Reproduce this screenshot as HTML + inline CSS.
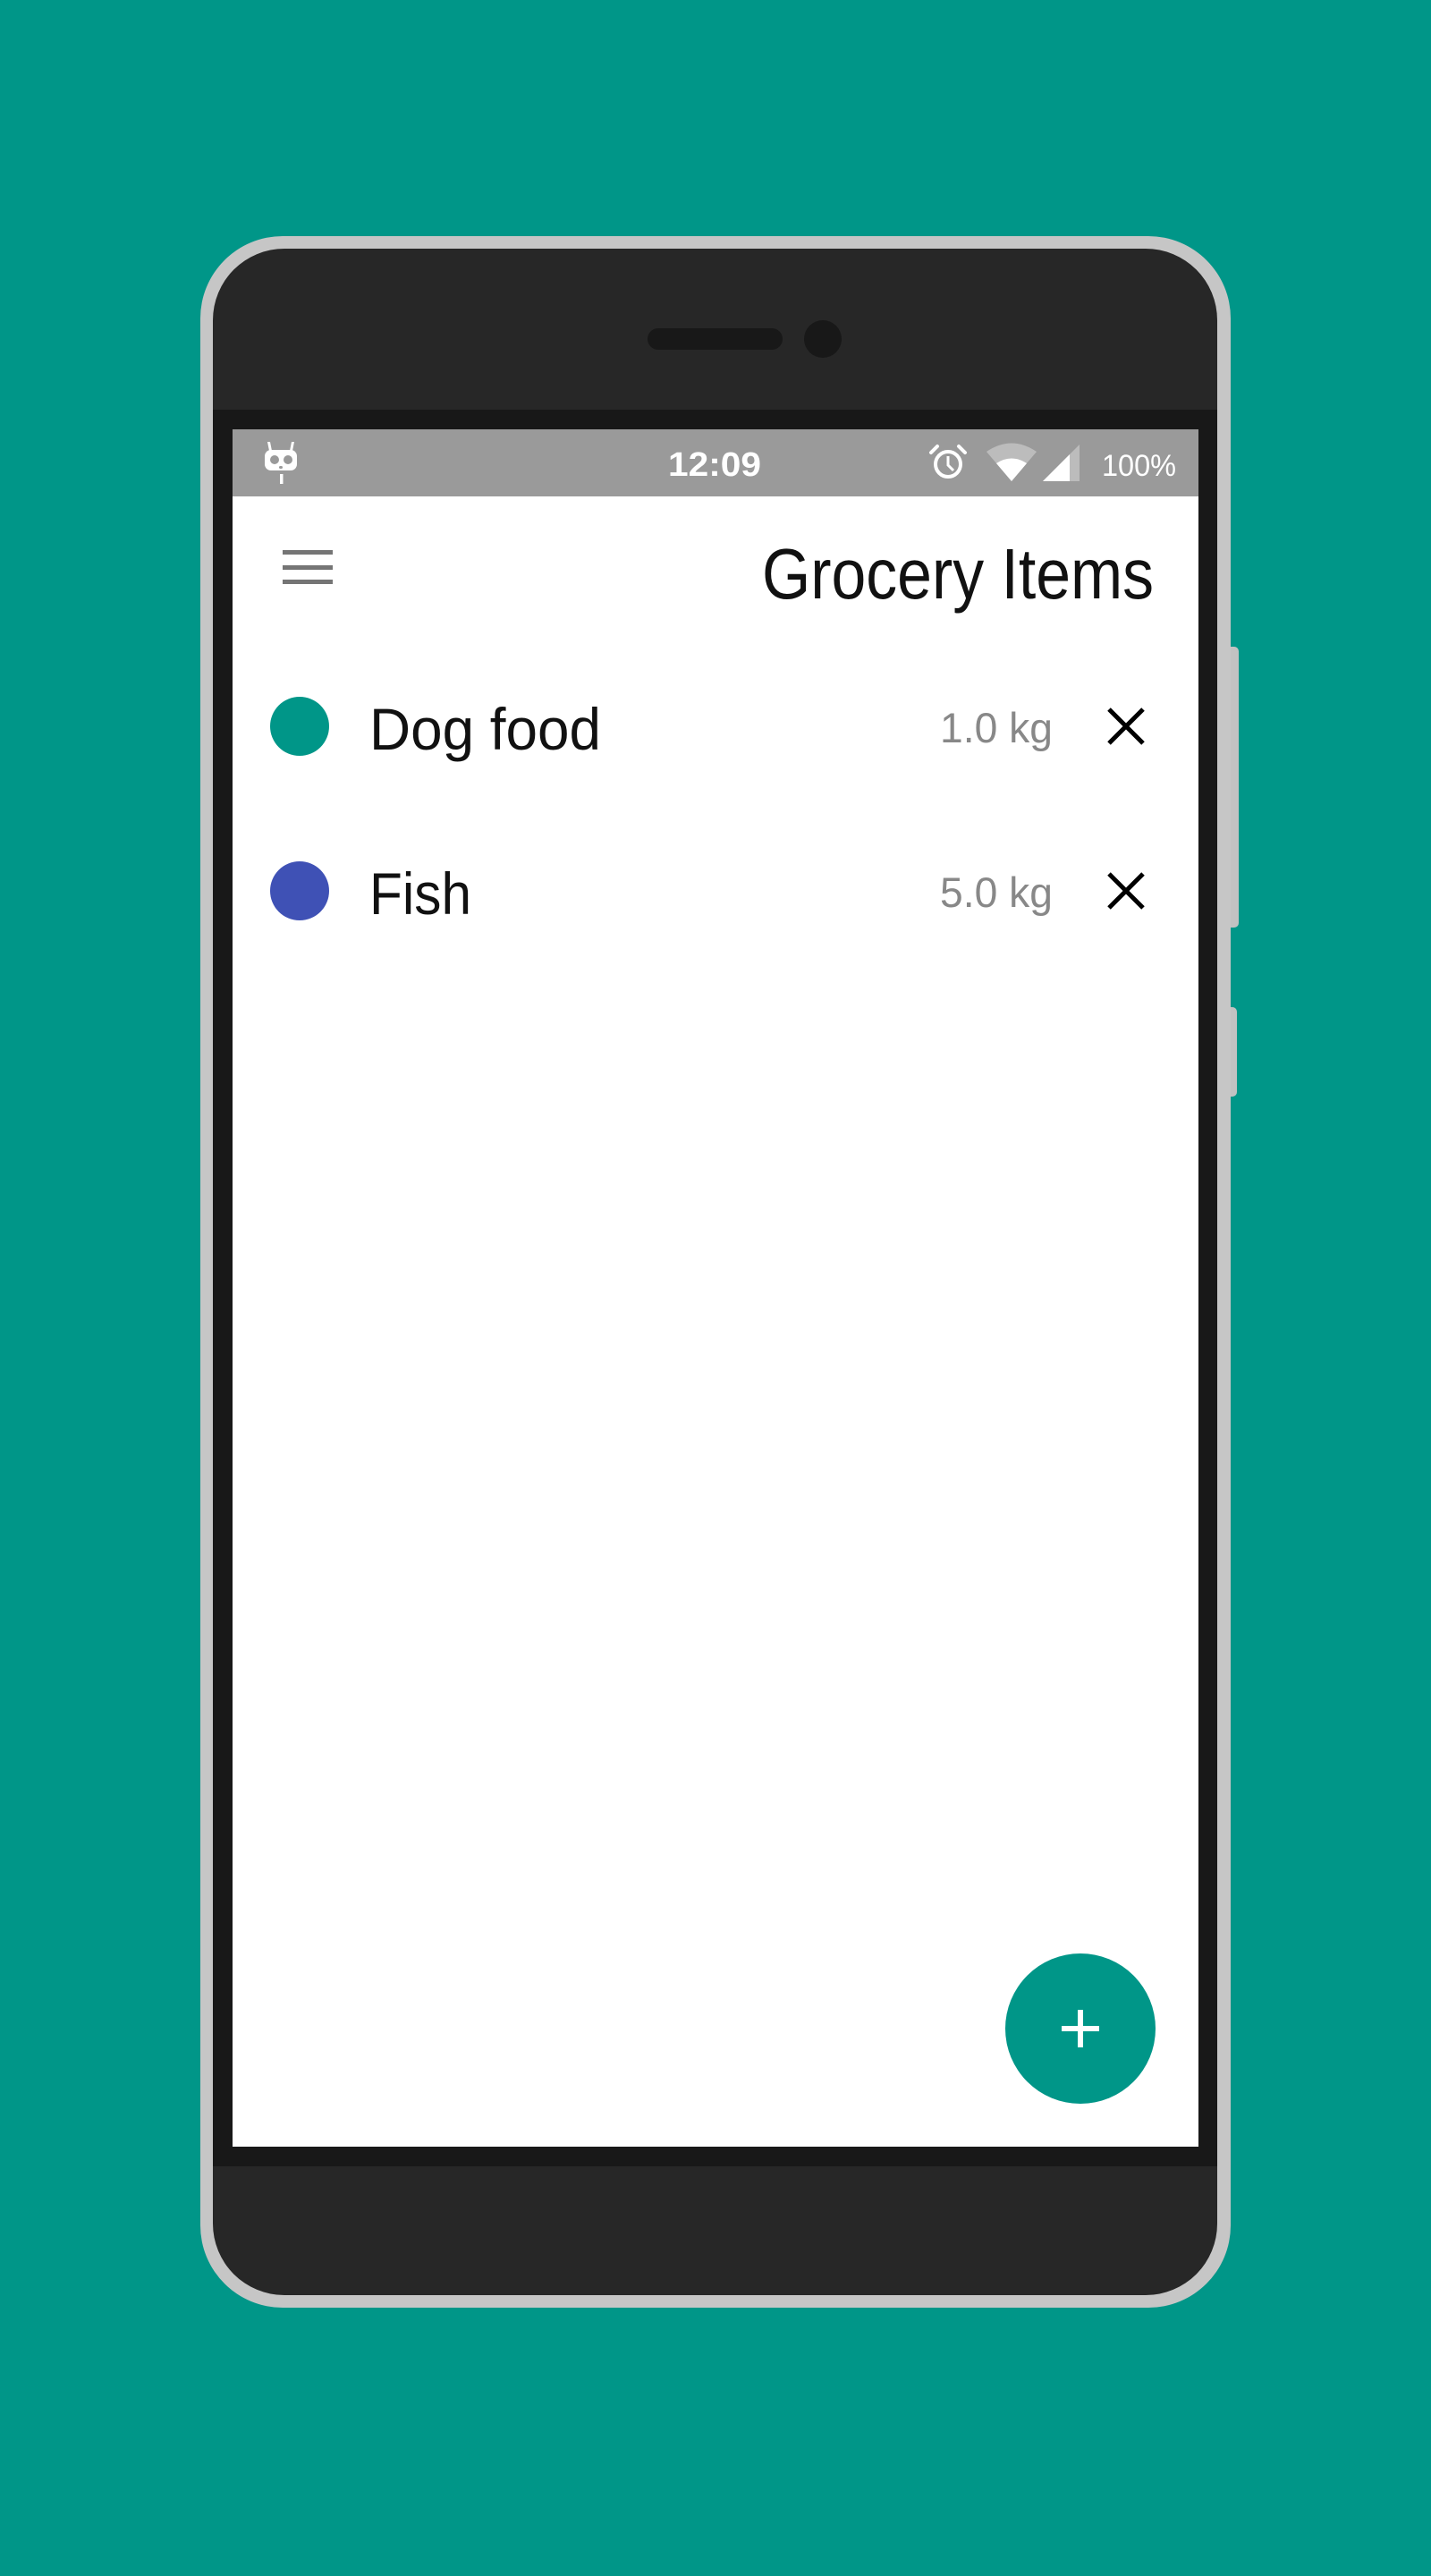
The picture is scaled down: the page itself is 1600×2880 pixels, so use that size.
<!DOCTYPE html>
<html><head><meta charset="utf-8"><style>html,body{margin:0;padding:0;background:#009688;}svg{display:block}</style></head>
<body>
<svg width="1600" height="2880" viewBox="0 0 1600 2880" xmlns="http://www.w3.org/2000/svg">
<rect width="1600" height="2880" fill="#009688"/>
<!-- side buttons -->
<rect x="1368" y="723" width="17" height="314" rx="5" fill="#c2c2c2"/>
<rect x="1368" y="1126" width="15" height="100" rx="5" fill="#c2c2c2"/>
<!-- phone frame -->
<rect x="224" y="264" width="1152" height="2316" rx="92" fill="#c6c6c6"/>
<rect x="238" y="278" width="1123" height="2288" rx="80" fill="#272727"/>
<rect x="238" y="458" width="1123" height="1964" fill="#181818"/>
<!-- speaker / camera -->
<rect x="724" y="367" width="151" height="24" rx="12" fill="#181818"/>
<circle cx="920" cy="379" r="21" fill="#181818"/>
<!-- screen -->
<rect x="260" y="480" width="1080" height="1920" fill="#ffffff"/>
<rect x="260" y="480" width="1080" height="75" fill="#9a9a9a"/>
<!-- CM logo -->
<g fill="#fff" stroke="none">
<rect x="296" y="503" width="36" height="23" rx="7"/>
<path d="M299 494 L302 494 L304 504 L301 504Z M329 494 L326 494 L324 504 L327 504Z"/>
<rect x="313" y="530" width="3.5" height="11"/>
</g>
<circle cx="307" cy="514" r="5" fill="#9a9a9a"/>
<circle cx="322" cy="514" r="5" fill="#9a9a9a"/>
<rect x="312" y="521" width="4" height="3" rx="1.5" fill="#9a9a9a"/>
<!-- time -->
<text x="799" y="532" text-anchor="middle" font-family="Liberation Sans, sans-serif" font-weight="bold" font-size="38" fill="#fff" textLength="104" lengthAdjust="spacingAndGlyphs">12:09</text>
<!-- alarm -->
<g fill="none" stroke="#fff" stroke-width="4">
<circle cx="1060" cy="519" r="14"/>
<path d="M1060 510 V520 L1066 526" stroke-width="3"/>
<path d="M1041 506 L1048 499 M1079 506 L1072 499" stroke-linecap="round"/>
</g>
<!-- wifi -->
<path d="M1103 505 Q1131 486 1159 505 L1131 538 Z" fill="#bcbcbc"/>
<path d="M1114 518 Q1131 507 1148 518 L1131 538 Z" fill="#fff"/>
<!-- signal -->
<path d="M1207 497 L1207 538 L1166 538 Z" fill="#bcbcbc"/>
<path d="M1196 508 L1196 538 L1166 538 Z" fill="#fff"/>
<text x="1232" y="532" font-family="Liberation Sans, sans-serif" font-size="34" fill="#fff" textLength="83" lengthAdjust="spacingAndGlyphs">100%</text>
<!-- hamburger -->
<g fill="#757575">
<rect x="316" y="615" width="56" height="5"/>
<rect x="316" y="632" width="56" height="5"/>
<rect x="316" y="648" width="56" height="5"/>
</g>
<text x="852" y="669" font-family="Liberation Sans, sans-serif" font-size="80" fill="#111" textLength="438" lengthAdjust="spacingAndGlyphs">Grocery Items</text>
<!-- row 1 -->
<circle cx="335" cy="812" r="33" fill="#009688"/>
<text x="413" y="838" font-family="Liberation Sans, sans-serif" font-size="66" fill="#111" textLength="259" lengthAdjust="spacingAndGlyphs">Dog food</text>
<text x="1051" y="830" font-family="Liberation Sans, sans-serif" font-size="47" fill="#888" textLength="126" lengthAdjust="spacingAndGlyphs">1.0 kg</text>
<path d="M1240 793 L1278 831 M1278 793 L1240 831" stroke="#000" stroke-width="5"/>
<!-- row 2 -->
<circle cx="335" cy="996" r="33" fill="#3f51b5"/>
<text x="413" y="1022" font-family="Liberation Sans, sans-serif" font-size="66" fill="#111" textLength="114" lengthAdjust="spacingAndGlyphs">Fish</text>
<text x="1051" y="1014" font-family="Liberation Sans, sans-serif" font-size="47" fill="#888" textLength="126" lengthAdjust="spacingAndGlyphs">5.0 kg</text>
<path d="M1240 977 L1278 1015 M1278 977 L1240 1015" stroke="#000" stroke-width="5"/>
<!-- FAB -->
<circle cx="1208" cy="2268" r="84" fill="#009688"/>
<rect x="1187" y="2265" width="42" height="6" fill="#fff"/>
<rect x="1205" y="2247" width="6" height="42" fill="#fff"/>
</svg>
</body></html>
